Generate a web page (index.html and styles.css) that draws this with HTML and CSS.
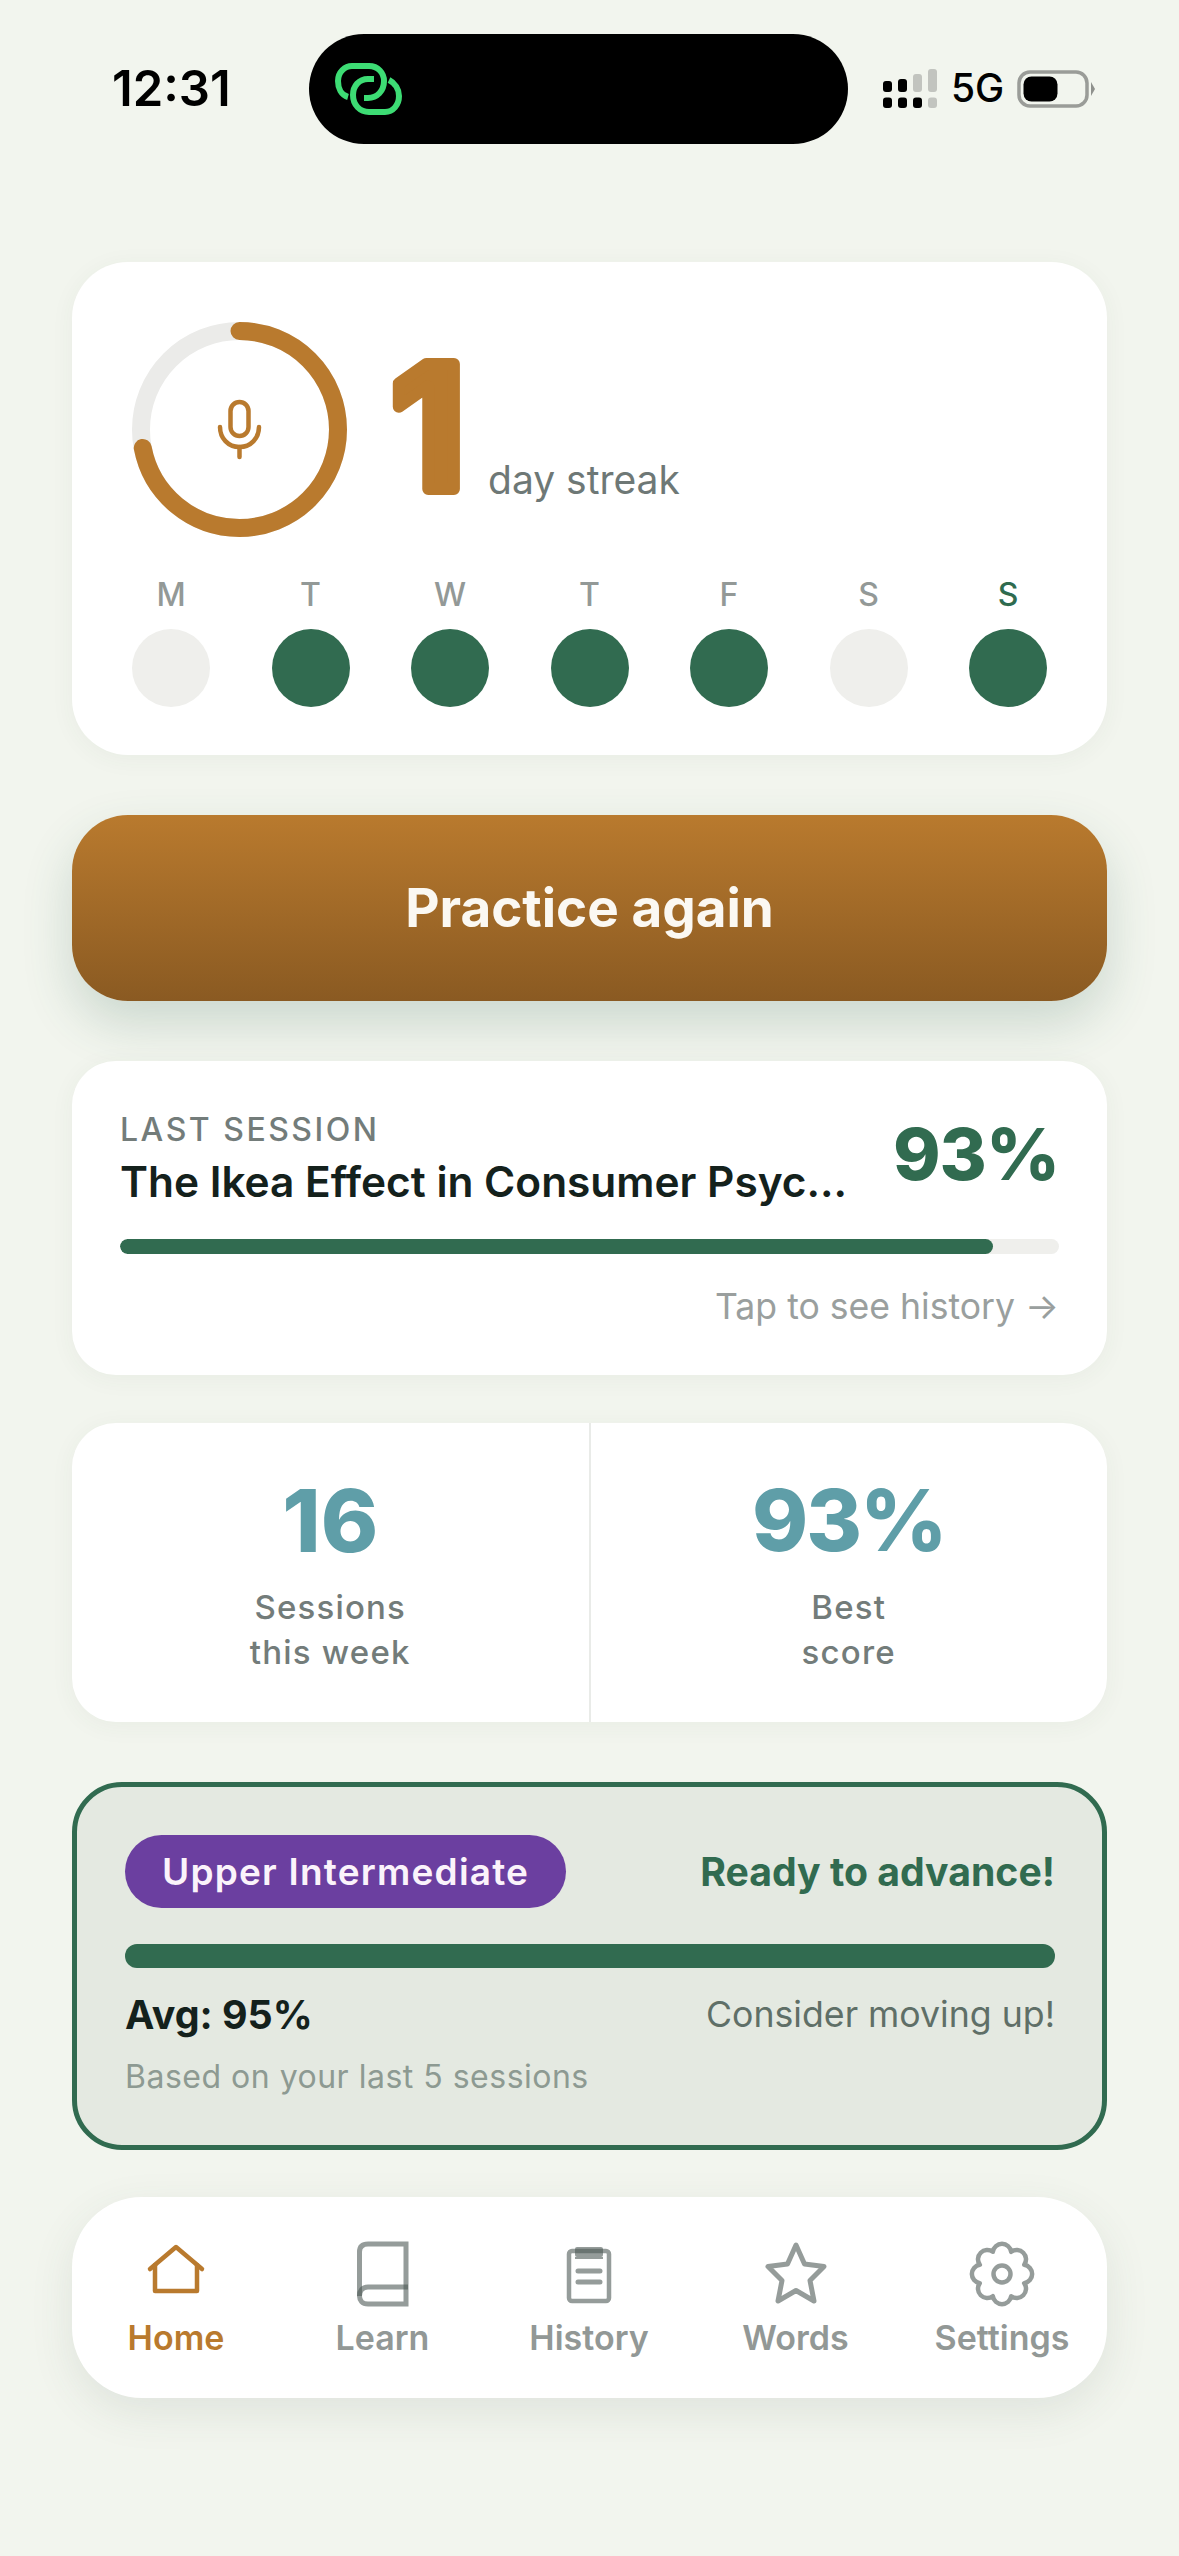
FILE: index.html
```html
<!DOCTYPE html>
<html lang="en">
<head>
<meta charset="utf-8">
<title>Home</title>
<link rel="stylesheet" href="styles.css">
</head>
<body>
<div class="page">
  <header class="status">
    <div class="time">12:31</div>
    <div class="island">
      <svg class="link" width="67" height="52" viewBox="0 0 67 52" fill="none" stroke="#3ddc74" stroke-width="6">
        <path d="M13 34C6 32 3 25 3 18C3 9 10 3 17 3H34C43 3 49 10 49 18C49 28 42 35 33 35H29"/>
        <path d="M39 16H33C24 16 18 23 18 32C18 42 25 49 34 49H50C58 49 64 42 64 33C64 26 60 20 54 17"/>
      </svg>
    </div>
    <div class="sys">
      <svg width="55" height="39" viewBox="0 0 55 39">
        <g fill="#000">
          <rect x="0" y="12" width="9" height="11" rx="3"/><rect x="15" y="10" width="9" height="13" rx="3"/>
          <rect x="0" y="28.5" width="9" height="10.5" rx="3"/><rect x="15" y="28.5" width="9" height="10.5" rx="3"/><rect x="30" y="28.5" width="9" height="10.5" rx="3"/>
        </g>
        <g fill="#c2c4bf">
          <rect x="30" y="5" width="9" height="18" rx="3"/><rect x="45" y="0" width="9" height="23" rx="3"/><rect x="45" y="28.5" width="9" height="10.5" rx="3"/>
        </g>
      </svg>
      <span class="net">5G</span>
      <svg class="batt" width="79" height="38" viewBox="0 0 79 38">
        <rect x="2" y="2" width="68" height="34" rx="11" fill="none" stroke="#9a9c98" stroke-width="3.5"/>
        <rect x="6.5" y="6.5" width="34" height="25" rx="8" fill="#000"/>
        <path d="M74 12L78 19L74 26Z" fill="#8f918d"/>
      </svg>
    </div>
  </header>

  <main class="main">
    <section class="card streak-card">
      <div class="streak-head">
        <div class="ring">
          <svg width="215" height="215" viewBox="0 0 215 215" fill="none">
            <circle cx="107.5" cy="107.5" r="98.5" stroke="#ebebe9" stroke-width="18"/>
            <circle cx="107.5" cy="107.5" r="98.5" stroke="#b97a2e" stroke-width="18" stroke-linecap="round" pathLength="100" stroke-dasharray="72 100" transform="rotate(-90 107.5 107.5)"/>
            <g stroke="#b97a2e" stroke-width="4.5" stroke-linecap="round">
              <rect x="98.5" y="80" width="18" height="34" rx="9"/>
              <path d="M88 105C88 116 96 125 107.5 125C119 125 127 116 127 105"/>
              <path d="M107.5 125V135"/>
            </g>
          </svg>
        </div>
        <svg class="streak-num" width="97" height="215" viewBox="0 0 97 215">
          <text x="8" y="167">1</text>
        </svg>
        <span class="streak-label">day streak</span>
      </div>
      <div class="days">
        <div class="day"><span class="day-name">M</span><span class="dot"></span></div>
        <div class="day"><span class="day-name">T</span><span class="dot on"></span></div>
        <div class="day"><span class="day-name">W</span><span class="dot on"></span></div>
        <div class="day"><span class="day-name">T</span><span class="dot on"></span></div>
        <div class="day"><span class="day-name">F</span><span class="dot on"></span></div>
        <div class="day"><span class="day-name">S</span><span class="dot"></span></div>
        <div class="day"><span class="day-name today">S</span><span class="dot on"></span></div>
      </div>
    </section>

    <button class="cta">Practice again</button>

    <section class="card session">
      <div class="session-top">
        <div>
          <div class="eyebrow">LAST SESSION</div>
          <div class="session-title">The Ikea Effect in Consumer Psyc...</div>
        </div>
        <div class="session-score">93%</div>
      </div>
      <div class="track"><div class="fill" style="width:93%"></div></div>
      <div class="tap">Tap to see history →</div>
    </section>

    <section class="card stats">
      <div class="stat">
        <div class="stat-num">16</div>
        <div class="stat-label">Sessions<br>this week</div>
      </div>
      <div class="stat">
        <div class="stat-num stat-num-tight">93%</div>
        <div class="stat-label">Best<br>score</div>
      </div>
    </section>

    <section class="level">
      <div class="level-row">
        <span class="pill">Upper Intermediate</span>
        <span class="ready">Ready to advance!</span>
      </div>
      <div class="level-bar"></div>
      <div class="level-row level-row-top">
        <span class="avg">Avg: 95%</span>
        <span class="consider">Consider moving up!</span>
      </div>
      <div class="based">Based on your last 5 sessions</div>
    </section>

    <nav class="card nav">
      <div class="tab active">
        <svg width="66" height="66" viewBox="0 0 66 66" fill="none" stroke="#b97a2e" stroke-width="4.5" stroke-linejoin="round" stroke-linecap="round">
          <path d="M7 28L33 6L59 28"/>
          <path d="M12 24V50H54V24"/>
        </svg>
        <span>Home</span>
      </div>
      <div class="tab">
        <svg width="66" height="66" viewBox="0 0 66 66" fill="none" stroke="#4f5a57" stroke-opacity=".6" stroke-width="5">
          <path d="M18 3H56V63H18C12 63 9.5 59 9.5 55V11C9.5 6 12 3 18 3Z"/>
          <path d="M9.5 55C9.5 50 12 46 18 46H58"/>
        </svg>
        <span>Learn</span>
      </div>
      <div class="tab">
        <svg width="66" height="66" viewBox="0 0 66 66" fill="none" stroke="#4f5a57" stroke-opacity=".6" stroke-width="4.5">
          <rect x="13" y="10" width="40" height="50" rx="3"/>
          <rect x="19" y="6" width="28" height="10" rx="2" fill="#4f5a57" fill-opacity=".6" stroke="none"/>
          <rect x="19" y="16" width="28" height="2" fill="#4f5a57" fill-opacity=".6" stroke="none"/>
          <path d="M22 30H44M22 41H44" stroke-width="5" stroke-linecap="round"/>
        </svg>
        <span>History</span>
      </div>
      <div class="tab">
        <svg width="66" height="66" viewBox="0 0 66 66" fill="none" stroke="#4f5a57" stroke-opacity=".6" stroke-width="5" stroke-linejoin="round">
          <path d="M33 4L41.5 23L61 25.5L47 39.5L51 60L33 49.5L15 60L19 39.5L5 25.5L24.5 23Z"/>
        </svg>
        <span>Words</span>
      </div>
      <div class="tab">
        <svg width="66" height="66" viewBox="0 0 66 66" fill="none" stroke="#4f5a57" stroke-opacity=".6" stroke-width="4.5" stroke-linejoin="round">
          <path d="M42.2 10.8A9.3 9.3 0 0 0 23.8 10.8A9.3 9.3 0 0 0 10.8 23.8A9.3 9.3 0 0 0 10.8 42.2A9.3 9.3 0 0 0 23.8 55.2A9.3 9.3 0 0 0 42.2 55.2A9.3 9.3 0 0 0 55.2 42.2A9.3 9.3 0 0 0 55.2 23.8A9.3 9.3 0 0 0 42.2 10.8Z"/>
          <circle cx="33" cy="33" r="8.5"/>
        </svg>
        <span>Settings</span>
      </div>
    </nav>
  </main>
</div>
</body>
</html>
```
FILE: styles.css
```css
* { box-sizing: border-box; }
html, body { margin: 0; padding: 0; background: #f2f5ee; }
body { font-family: Inter, "Noto Sans", sans-serif; color: #14211c; }
.page { width: 1179px; height: 2556px; overflow: hidden; background: #f2f5ee; }

.status { display: flex; align-items: center; height: 144px; padding: 34px 0 0 112px; }
.time { width: 197px; font-size: 49px; font-weight: 600; color: #000; line-height: 56px; }
.island { width: 539px; height: 110px; border-radius: 55px; background: #000; display: flex; align-items: flex-start; padding: 29px 0 0 26px; }
.sys { display: flex; align-items: center; padding-left: 35px; margin-top: -2px; }
.net { font-size: 39px; font-weight: 500; color: #000; line-height: 40px; margin: 0 13px 0 13px; }
.batt { margin-top: 1px; }

.main { display: flex; flex-direction: column; padding: 118px 72px 0; }
.card { background: #fff; box-shadow: 0 4px 24px rgba(60, 80, 65, .05); }

.streak-card { height: 493px; border-radius: 56px; padding: 60px 60px 48px; margin-bottom: 60px; }
.streak-head { display: flex; align-items: flex-start; }
.ring { width: 215px; height: 215px; flex: none; }
.ring svg { display: block; }
.streak-num { flex: none; margin-left: 36px; font-family: Inter, sans-serif; font-size: 172px; font-weight: 700; }
.streak-num text { fill: #b97a2e; stroke: #b97a2e; stroke-width: 12px; stroke-linejoin: round; }
.streak-label { font-size: 39px; line-height: 48px; font-weight: 400; color: #6e7876; margin: 134px 0 0 8px; }

.days { display: flex; justify-content: space-between; margin-top: 40px; }
.day { width: 78px; display: flex; flex-direction: column; align-items: center; gap: 16px; }
.day-name { font-size: 32px; line-height: 36px; font-weight: 500; color: #939997; }
.day-name.today { color: #2f6b4f; }
.dot { width: 78px; height: 78px; border-radius: 50%; background: #efefec; }
.dot.on { background: #316b50; }

.cta { display: block; width: 100%; height: 186px; border: 0; border-radius: 56px; margin-bottom: 60px; font-family: inherit; font-size: 53px; font-weight: 700; color: #fbf8f2; background: linear-gradient(180deg, #b97a2e 0%, #8a5a22 100%); box-shadow: 0 22px 50px rgba(50, 100, 80, .2); }

.session { height: 314px; border-radius: 44px; padding: 48px 48px 0; margin-bottom: 48px; }
.session-top { display: flex; justify-content: space-between; align-items: flex-start; }
.eyebrow { font-size: 32px; line-height: 38px; font-weight: 500; letter-spacing: 2.5px; color: #737c7a; margin-top: 2px; }
.session-title { font-size: 42.4px; line-height: 52px; font-weight: 600; color: #14211c; margin-top: 7px; }
.session-score { font-size: 72px; line-height: 90px; font-weight: 800; letter-spacing: -1px; color: #316b50; }
.track { height: 15px; border-radius: 8px; background: #efefec; margin-top: 31px; overflow: hidden; }
.fill { height: 100%; border-radius: 8px; background: #316b50; }
.tap { text-align: right; font-size: 35.6px; line-height: 44px; font-weight: 400; color: #9a9f9e; margin-top: 31px; }

.stats { display: flex; height: 299px; border-radius: 44px; margin-bottom: 60px; }
.stat { flex: 1; display: flex; flex-direction: column; align-items: center; padding-top: 48px; }
.stat + .stat { border-left: 2px solid #e9ebe8; }
.stat-num { font-size: 87px; line-height: 100px; font-weight: 800; color: #5f9ea8; }
.stat-num-tight { font-size: 85px; letter-spacing: -2px; }
.stat-label { font-size: 33px; line-height: 45px; font-weight: 500; letter-spacing: 1.2px; color: #737c7a; text-align: center; margin-top: 14px; }

.level { height: 368px; border: 5px solid #316b50; border-radius: 50px; background: #e4e9e1; padding: 48px 47px 0 48px; margin-bottom: 47px; }
.level-row { display: flex; justify-content: space-between; align-items: center; }
.level-row-top { align-items: flex-start; margin-top: 24px; }
.pill { display: block; height: 73px; line-height: 73px; padding: 0 37px; border-radius: 37px; background: #6b3fa0; color: #fbf3fb; font-size: 37px; font-weight: 600; letter-spacing: 1.2px; }
.ready { font-size: 39.2px; font-weight: 700; color: #316b50; }
.level-bar { height: 24px; border-radius: 12px; background: #316b50; margin-top: 36px; }
.avg { font-size: 39.4px; line-height: 46px; font-weight: 700; color: #14211c; }
.consider { font-size: 35.7px; line-height: 44px; font-weight: 400; color: #5f6f67; }
.based { font-size: 32px; line-height: 40px; font-weight: 400; letter-spacing: .5px; color: #8d9a92; margin-top: 19px; }

.nav { display: flex; justify-content: space-between; height: 201px; border-radius: 70px; padding: 44px 36px 0 35px; box-shadow: 0 14px 44px rgba(60, 80, 65, .1); }
.tab { width: 138px; display: flex; flex-direction: column; align-items: center; font-size: 34px; line-height: 42px; font-weight: 600; color: #929896; }
.tab svg { display: block; margin-bottom: 10px; }
.tab.active { color: #b97a2e; }
```
